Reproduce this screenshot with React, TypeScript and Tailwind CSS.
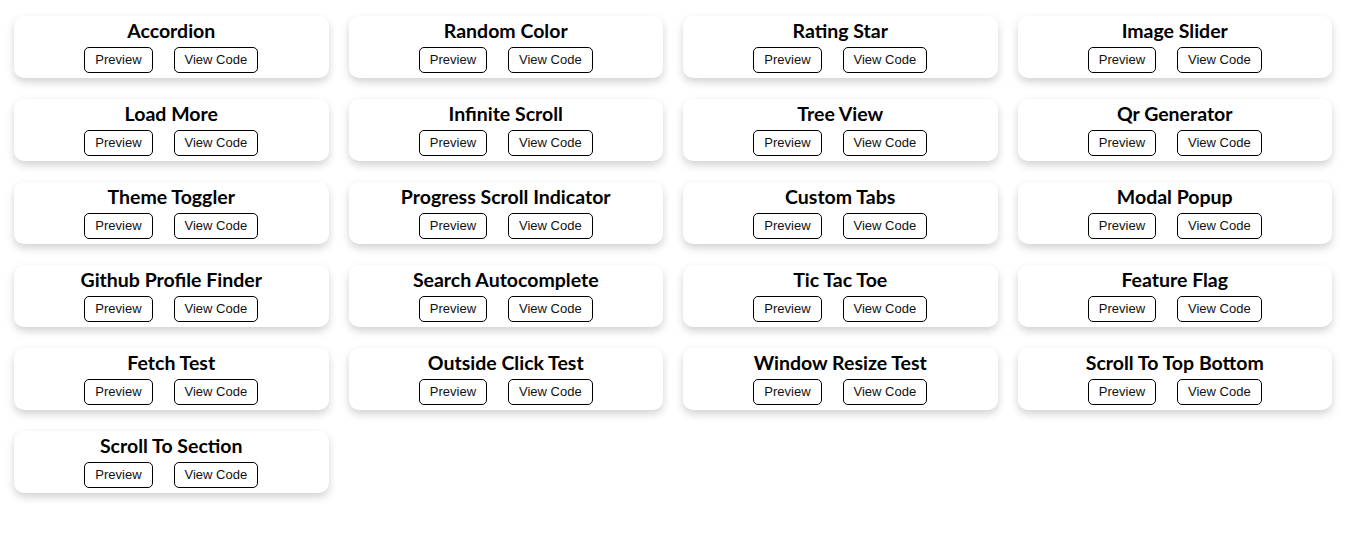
const ITEMS = [
  "Accordion", "Random Color", "Rating Star", "Image Slider",
  "Load More", "Infinite Scroll", "Tree View", "Qr Generator",
  "Theme Toggler", "Progress Scroll Indicator", "Custom Tabs", "Modal Popup",
  "Github Profile Finder", "Search Autocomplete", "Tic Tac Toe", "Feature Flag",
  "Fetch Test", "Outside Click Test", "Window Resize Test", "Scroll To Top Bottom",
  "Scroll To Section",
];

// ── Card ─────────────────────────────────────────────────────
function ProjectCard({ title }: { title: string }) {
  return (
    <div className="h-[62px] rounded-[10px] bg-white shadow-[0_4px_8px_rgba(0,0,0,0.18)] flex flex-col items-center pt-[3px]">
      <h2 className="font-['Lato',sans-serif] font-bold text-[19.5px] leading-[24px] text-black">
        {title}
      </h2>
      <div className="mt-[4px] flex gap-[21px] font-['Liberation_Sans',Arial,sans-serif] text-[13px] text-[#111]">
        <button className="h-[26px] px-[10px] border border-black rounded-[5px] bg-white">
          Preview
        </button>
        <button className="h-[26px] px-[10px] border border-black rounded-[5px] bg-white">
          View Code
        </button>
      </div>
    </div>
  );
}

export default function App() {
  return (
    <div className="min-h-screen bg-white pt-[16px] pl-[14px] pr-[19px]">
      <div className="grid grid-cols-4 gap-x-5 gap-y-[21px]">
        {ITEMS.map((t) => (
          <ProjectCard key={t} title={t} />
        ))}
      </div>
    </div>
  );
}
